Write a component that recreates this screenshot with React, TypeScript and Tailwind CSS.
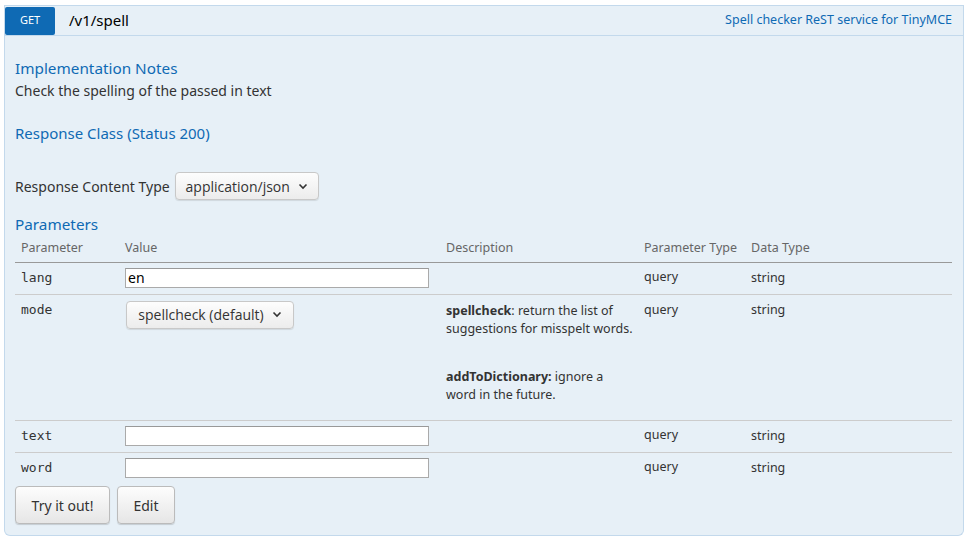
import React from "react";

const Chevron = () => (
  <svg width="10" height="7" viewBox="0 0 10 7" className="ml-[8px]">
    <path d="M1.5 1.5 L5 5 L8.5 1.5" fill="none" stroke="#333" strokeWidth="1.6" />
  </svg>
);

const Select = ({ label, w }: { label: string; w: string }) => (
  <div
    className={`${w} h-[28px] flex items-center justify-center rounded-[4px] border border-[#c8c8c8] bg-gradient-to-b from-[#fdfdfd] to-[#ececec] text-[14px] text-[#333] shadow-[0_1px_1px_rgba(0,0,0,0.1)]`}
    style={{ fontFamily: '"Open Sans", "Noto Sans", sans-serif' }}
  >
    <span>{label}</span>
    <Chevron />
  </div>
);

const Input = ({ value = "" }: { value?: string }) => (
  <div className="w-[304px] h-[20px] bg-white border border-[#aaa] border-t-[#999] flex items-center px-[2px] text-[14px] text-[#000]">
    {value}
  </div>
);

export default function App() {
  const font = { fontFamily: '"Noto Sans", "Open Sans", sans-serif' };
  const mono = { fontFamily: '"DejaVu Sans Mono", monospace' };
  return (
    <div className="w-[968px] h-[542px] bg-white pt-[5px] pl-[4px]" style={font}>
      <div className="w-[960px]">
        {/* header */}
        <div className="h-[31px] flex items-center border border-[#c3d9ec] bg-[#e7f0f7]">
          <div className="w-[50px] h-[28px] bg-[#0f6ab4] rounded-[2px] flex items-center justify-center text-white text-[11px]">
            GET
          </div>
          <div className="ml-[14px] text-[15px] text-black">/v1/spell</div>
          <div className="ml-auto mr-[11px] text-[12.5px] text-[#0f6ab4]">
            Spell checker ReST service for TinyMCE
          </div>
        </div>
        {/* body */}
        <div className="border border-t-0 border-[#c3d9ec] bg-[#e7f0f7] rounded-b-[6px] pl-[10px] pr-[11px] pt-[21px] pb-[11px]">
          <div className="text-[15.3px] leading-[22px] text-[#0f6ab4]">Implementation Notes</div>
          <div className="mt-[3px] text-[14px] leading-[18px] text-[#333]">
            Check the spelling of the passed in text
          </div>
          <div className="mt-[22px] text-[15px] leading-[22px] text-[#0f6ab4]">Response Class (Status 200)</div>
          <div className="mt-[28px] flex items-center">
            <span className="text-[14px] text-[#333] mr-[5px]">Response Content Type</span>
            <Select label="application/json" w="w-[144px]" />
          </div>
          <div className="mt-[13px] text-[15.3px] leading-[22px] text-[#0f6ab4]">Parameters</div>
          <table className="w-[937px] table-fixed border-collapse text-[12.5px] text-[#333]">
            <colgroup>
              <col className="w-[104px]" />
              <col className="w-[321px]" />
              <col className="w-[198px]" />
              <col className="w-[107px]" />
              <col className="w-[207px]" />
            </colgroup>
            <thead>
              <tr className="h-[27px] border-b border-[#999] text-left text-[#666] text-[12.5px]">
                <th className="font-normal px-[6px] pt-[1px]">Parameter</th>
                <th className="font-normal px-[6px] pt-[1px]">Value</th>
                <th className="font-normal px-[6px] pt-[1px]">Description</th>
                <th className="font-normal px-[6px] pt-[1px]">Parameter Type</th>
                <th className="font-normal px-[6px] pt-[1px]">Data Type</th>
              </tr>
            </thead>
            <tbody className="align-top">
              <tr className="h-[32px] border-b border-[#ccc]">
                <td className="px-[6px] pt-[5px] text-[13px]" style={mono}>lang</td>
                <td className="px-[6px] pt-[5px]"><Input value="en" /></td>
                <td className="px-[6px]"></td>
                <td className="px-[6px] pt-[5px]">query</td>
                <td className="px-[6px] pt-[6px]">string</td>
              </tr>
              <tr className="h-[126px] border-b border-[#ccc]">
                <td className="px-[6px] pt-[5px] text-[13px]" style={mono}>mode</td>
                <td className="px-[7px] pt-[6px]"><Select label="spellcheck (default)" w="w-[168px]" /></td>
                <td className="px-[6px] pt-[7px] leading-[18px] whitespace-nowrap">
                  <p className="mb-[30px]">
                    <b className="font-bold">spellcheck</b>: return the list of
                    <br />
                    suggestions for misspelt words.
                  </p>
                  <p>
                    <b className="font-bold">addToDictionary:</b> ignore a
                    <br />
                    word in the future.
                  </p>
                </td>
                <td className="px-[6px] pt-[6px]">query</td>
                <td className="px-[6px] pt-[6px]">string</td>
              </tr>
              <tr className="h-[32px] border-b border-[#ccc]">
                <td className="px-[6px] pt-[5px] text-[13px]" style={mono}>text</td>
                <td className="px-[6px] pt-[5px]"><Input /></td>
                <td className="px-[6px]"></td>
                <td className="px-[6px] pt-[5px]">query</td>
                <td className="px-[6px] pt-[6px]">string</td>
              </tr>
              <tr className="h-[32px]">
                <td className="px-[6px] pt-[5px] text-[13px]" style={mono}>word</td>
                <td className="px-[6px] pt-[5px]"><Input /></td>
                <td className="px-[6px]"></td>
                <td className="px-[6px] pt-[5px]">query</td>
                <td className="px-[6px] pt-[6px]">string</td>
              </tr>
            </tbody>
          </table>
          <div className="mt-[2px] flex gap-[7px]">
            <button className="w-[95px] h-[38px] rounded-[4px] border border-[#bbb] bg-gradient-to-b from-[#fdfdfd] to-[#e6e6e6] text-[14px] text-[#333] shadow-[0_1px_1px_rgba(0,0,0,0.15)]">
              Try it out!
            </button>
            <button className="w-[58px] h-[38px] rounded-[4px] border border-[#bbb] bg-gradient-to-b from-[#fdfdfd] to-[#e6e6e6] text-[14px] text-[#333] shadow-[0_1px_1px_rgba(0,0,0,0.15)]">
              Edit
            </button>
          </div>
        </div>
      </div>
    </div>
  );
}
